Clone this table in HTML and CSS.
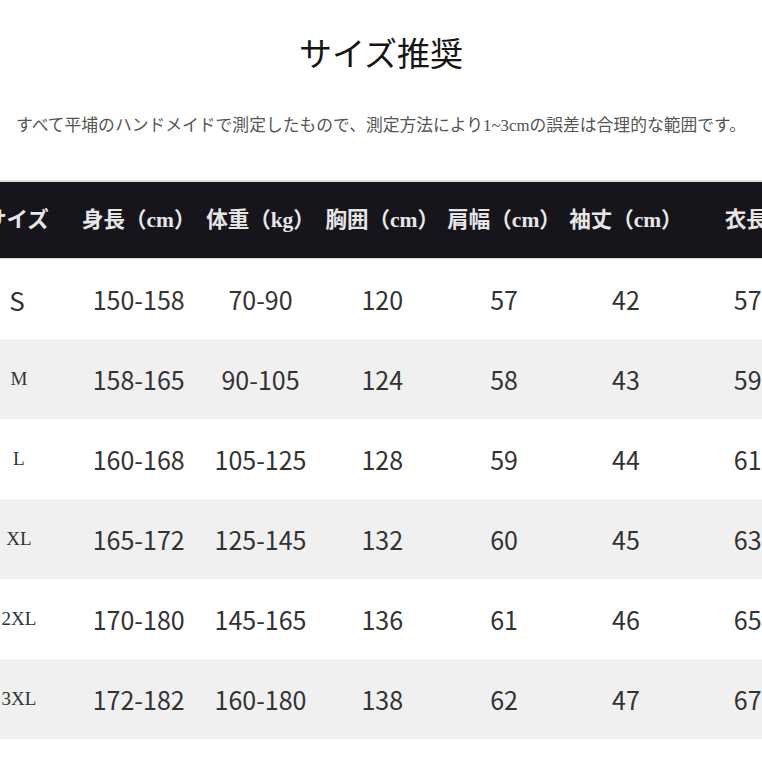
FILE: index.html
```html
<!DOCTYPE html>
<html lang="ja">
<head>
<meta charset="utf-8">
<title>サイズ推奨</title>
<link rel="stylesheet" href="styles.css">
</head>
<body>
<div class="page">
  <h1 class="title">サイズ推奨</h1>
  <p class="note">すべて平埔のハンドメイドで測定したもので、測定方法により<span class="latin">1~3cm</span>の誤差は合理的な範囲です。</p>
  <div class="table">
    <div class="row head">
      <div class="cell">サイズ</div>
      <div class="cell">身長（cm）</div>
      <div class="cell">体重（kg）</div>
      <div class="cell">胸囲（cm）</div>
      <div class="cell">肩幅（cm）</div>
      <div class="cell">袖丈（cm）</div>
      <div class="cell last">衣長（cm）</div>
    </div>
    <div class="row">
      <div class="cell size sans">S</div>
      <div class="cell">150-158</div><div class="cell">70-90</div><div class="cell">120</div><div class="cell">57</div><div class="cell">42</div><div class="cell">57</div>
    </div>
    <div class="row alt">
      <div class="cell size">M</div>
      <div class="cell">158-165</div><div class="cell">90-105</div><div class="cell">124</div><div class="cell">58</div><div class="cell">43</div><div class="cell">59</div>
    </div>
    <div class="row">
      <div class="cell size">L</div>
      <div class="cell">160-168</div><div class="cell">105-125</div><div class="cell">128</div><div class="cell">59</div><div class="cell">44</div><div class="cell">61</div>
    </div>
    <div class="row alt">
      <div class="cell size">XL</div>
      <div class="cell">165-172</div><div class="cell">125-145</div><div class="cell">132</div><div class="cell">60</div><div class="cell">45</div><div class="cell">63</div>
    </div>
    <div class="row">
      <div class="cell size">2XL</div>
      <div class="cell">170-180</div><div class="cell">145-165</div><div class="cell">136</div><div class="cell">61</div><div class="cell">46</div><div class="cell">65</div>
    </div>
    <div class="row alt">
      <div class="cell size">3XL</div>
      <div class="cell">172-182</div><div class="cell">160-180</div><div class="cell">138</div><div class="cell">62</div><div class="cell">47</div><div class="cell">67</div>
    </div>
  </div>
</div>
</body>
</html>
```
FILE: styles.css
```css
html, body {
  margin: 0;
  padding: 0;
  background: #ffffff;
}
body {
  width: 762px;
  height: 762px;
  overflow: hidden;
  font-family: "Noto Sans CJK JP", "Noto Sans", sans-serif;
}
.page {
  width: 762px;
  overflow: hidden;
  padding-top: 36px;
}
.title {
  margin: 0;
  font-size: 33px;
  line-height: 33px;
  height: 33px;
  font-weight: 400;
  color: #151515;
  text-align: center;
}
.note {
  margin: 47px 0 0 0;
  font-size: 16.8px;
  line-height: 17px;
  color: #555555;
  text-align: center;
  white-space: nowrap;
}
.latin {
  font-family: "Liberation Serif", serif;
}
.table {
  margin-top: 46px;
  margin-left: -44px;
  width: 853px;
}
.row {
  display: grid;
  grid-template-columns: repeat(7, 121.8px);
  height: 80px;
  align-items: center;
  background: #ffffff;
}
.row.alt {
  background: #f0f0f0;
}
.row.head {
  background: #15151b;
  border-top: 2px solid #dcdcdc;
  border-bottom: 1px solid #d4d4d4;
  height: 79px;
  box-sizing: border-box;
  padding-bottom: 6px;
}
.cell {
  text-align: center;
  white-space: nowrap;
  font-size: 25px;
  color: #333333;
}
.head .cell {
  font-family: "Liberation Serif", "Noto Sans CJK JP", serif;
  font-size: 21.5px;
  font-weight: 700;
  color: #e6e6e6;
}
.head .cell.last {
  text-align: left;
  padding-left: 38px;
}
.cell.size {
  font-family: "Liberation Serif", serif;
  font-size: 19px;
  color: #333333;
  padding-left: 4px;
}
.cell.size.sans {
  font-family: "Noto Sans CJK JP", "Noto Sans", sans-serif;
  font-size: 26px;
  padding-left: 0;
}
```
